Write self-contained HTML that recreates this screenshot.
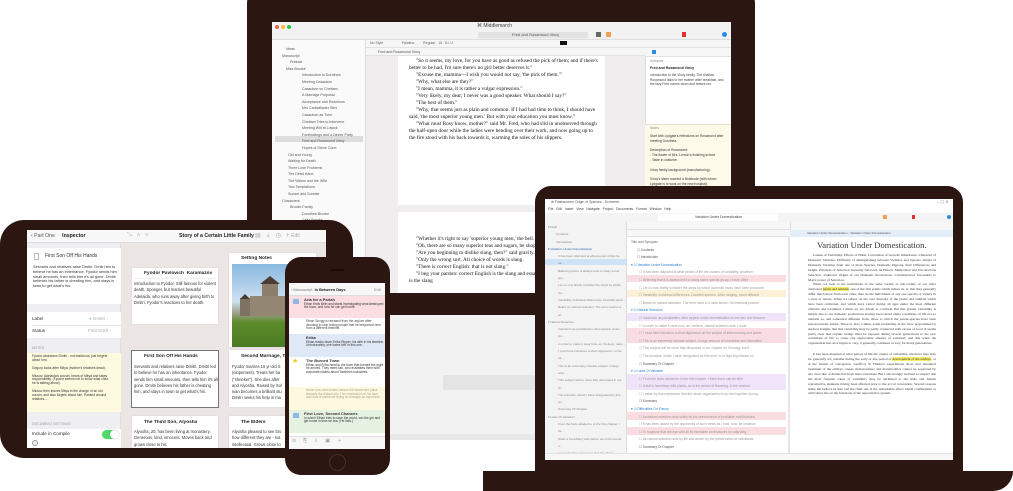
<!DOCTYPE html>
<html><head><meta charset="utf-8">
<style>
*{box-sizing:border-box;margin:0;padding:0}
html,body{width:1013px;height:491px;overflow:hidden}
body{background:#fff;font-family:"Liberation Sans",sans-serif;position:relative}
.a{position:absolute}
.frame{background:#2b1611}
.serif{font-family:"Liberation Serif",serif}
.t{position:absolute;white-space:nowrap;overflow:hidden}
</style></head><body>
<div class="a" style="left:0;top:0;width:1013px;height:491px;overflow:hidden">

<!-- iMac stand -->
<div class="a" style="left:383px;top:300px;width:155px;height:140px;background:#f2f2f2"></div>
<div class="a" style="left:443px;top:375px;width:95px;height:15px;background:#e4e4e4"></div>
<div class="a" style="left:383px;top:434px;width:155px;height:6px;background:#e8e8e8"></div>

<!-- iMac -->
<div class="a frame" style="left:247px;top:-20px;width:508px;height:335px;border-radius:24px"></div>
<div class="a" style="left:272px;top:22px;width:459px;height:271px;background:#fff;overflow:hidden">
  <div class="a" style="left:0;top:0;width:459px;height:18px;background:#f3f2f2;border-bottom:1px solid #ddd"></div>
  <div class="a" style="left:3px;top:3px;width:4px;height:4px;border-radius:50%;background:#f25f57"></div>
  <div class="a" style="left:9px;top:3px;width:4px;height:4px;border-radius:50%;background:#f8bd2e"></div>
  <div class="a" style="left:15px;top:3px;width:4px;height:4px;border-radius:50%;background:#29c840"></div>
  <div class="t" style="left:205px;top:1px;font-size:5px;color:#444">⌘ Middlemarch</div>
  <div class="a" style="left:206px;top:10px;width:110px;height:6px;background:#e3e2e2;border-radius:1px"></div>
  <div class="t" style="left:240px;top:10px;font-size:4px;color:#555">Fred and Rosamond Vincy</div>
  <div class="a" style="left:324px;top:10px;width:5px;height:5px;background:#666"></div>
  <div class="a" style="left:334px;top:10px;width:5px;height:5px;background:#f0a050"></div>
  <div class="a" style="left:410px;top:10px;width:4px;height:5px;background:#d33"></div>
  <div class="a" style="left:450px;top:10px;width:5px;height:5px;border-radius:50%;background:#2a8be6"></div>
  <div class="a" style="left:0;top:18px;width:94px;height:253px;background:#fafafa;border-right:1px solid #ddd"></div>
  <div class="a" style="left:3px;top:114px;width:88px;height:6px;background:#ddd"></div>
  <div class="a" style="left:0;top:24px;font-size:3.6px;color:#555;line-height:6.6px">
   <div style="padding-left:14px">Ideas</div><div style="padding-left:10px">Manuscript</div><div style="padding-left:18px">Prelude</div><div style="padding-left:14px">Miss Brooke</div>
   <div style="padding-left:30px">Introduction to Dorothea</div><div style="padding-left:30px">Meeting Casaubon</div><div style="padding-left:30px">Casaubon vs Chettam</div><div style="padding-left:30px">A Marriage Proposal</div><div style="padding-left:30px">Acceptance and Reactions</div><div style="padding-left:30px">Mrs Cadwallader Stirs</div><div style="padding-left:30px">Casaubon as Tutor</div><div style="padding-left:30px">Chettam Tries to Intervene</div><div style="padding-left:30px">Meeting Will at Lowick</div><div style="padding-left:30px">Forebodings and a Dinner Party</div><div style="padding-left:30px">Fred and Rosamond Vincy</div><div style="padding-left:30px">Hopes of Stone Court</div>
   <div style="padding-left:16px">Old and Young</div><div style="padding-left:16px">Waiting for Death</div><div style="padding-left:16px">Three Love Problems</div><div style="padding-left:16px">The Dead Hand</div><div style="padding-left:16px">The Widow and the Wife</div><div style="padding-left:16px">Two Temptations</div><div style="padding-left:16px">Sunset and Sunrise</div><div style="padding-left:10px">Characters</div><div style="padding-left:18px">Brooke Family</div><div style="padding-left:30px">Dorothea Brooke</div><div style="padding-left:30px">Celia Brooke</div>
  </div>
  <div class="a" style="left:94px;top:18px;width:280px;height:253px;background:#efeded"></div>
  <div class="a" style="left:94px;top:18px;width:365px;height:8px;background:#f7f6f6;border-bottom:1px solid #e2e2e2"></div>
  <div class="t" style="left:98px;top:19px;font-size:3.5px;color:#666">No Style &nbsp; &nbsp; &nbsp; &nbsp; &nbsp; &nbsp; &nbsp; &nbsp; &nbsp; Palatino &nbsp; &nbsp; &nbsp; &nbsp; Regular &nbsp; 16 &nbsp; B I U</div>
  <div class="a" style="left:288px;top:19px;width:7px;height:4px;background:#111"></div>
  <div class="a" style="left:94px;top:26px;width:280px;height:8px;background:#f7f6f6;border-bottom:1px solid #e2e2e2"></div>
  <div class="t" style="left:106px;top:28px;font-size:3.6px;color:#555">Fred and Rosamond Vincy</div>
  <div class="a" style="left:126px;top:34px;width:207px;height:149px;background:#fff"></div>
  <div class="a serif" style="left:137px;top:36px;width:190px;font-size:5.3px;line-height:7px;color:#111">
   <div style="text-indent:7px">"So it seems, my love, for you have as good as refused the pick of them; and if there's better to be had, I'm sure there's no girl better deserves it."</div>
   <div style="text-indent:7px">"Excuse me, mamma—I wish you would not say, 'the pick of them.'"</div>
   <div style="text-indent:7px">"Why, what else are they?"</div>
   <div style="text-indent:7px">"I mean, mamma, it is rather a vulgar expression."</div>
   <div style="text-indent:7px">"Very likely, my dear; I never was a good speaker. What should I say?"</div>
   <div style="text-indent:7px">"The best of them."</div>
   <div style="text-indent:7px">"Why, that seems just as plain and common. If I had had time to think, I should have said, 'the most superior young men.' But with your education you must know."</div>
   <div style="text-indent:7px">"What must Rosy know, mother?" said Mr. Fred, who had slid in unobserved through the half-open door while the ladies were bending over their work, and now going up to the fire stood with his back towards it, warming the soles of his slippers.</div>
  </div>
  <div class="a" style="left:126px;top:190px;width:207px;height:81px;background:#fff"></div>
  <div class="a serif" style="left:137px;top:214px;width:200px;font-size:5.3px;line-height:7px;color:#111">
   <div style="text-indent:7px">"Whether it's right to say 'superior young men,' the bell.</div>
   <div style="text-indent:7px">"Oh, there are so many superior teas and sugars, be shopkeepers' slang."</div>
   <div style="text-indent:7px">"Are you beginning to dislike slang, then?" said gravity.</div>
   <div style="text-indent:7px">"Only the wrong sort. All choice of words is slang.</div>
   <div style="text-indent:7px">"There is correct English: that is not slang."</div>
   <div style="text-indent:7px">"I beg your pardon: correct English is the slang and essays. And the strongest slang of all is the slang</div>
  </div>
  <div class="a" style="left:373px;top:26px;width:86px;height:245px;background:#fff;border-left:1px solid #ddd"></div>
  <div class="a" style="left:373px;top:26px;width:86px;height:9px;background:#f7f6f6;border-bottom:1px solid #e2e2e2"></div>
  <div class="a" style="left:380px;top:28px;width:4px;height:4px;background:#2a8be6"></div>
  <div class="t" style="left:378px;top:37px;font-size:3.3px;color:#888">Synopsis</div>
  <div class="t" style="left:378px;top:44px;font-size:3.5px;color:#222;font-weight:bold">Fred and Rosamond Vincy</div>
  <div class="a" style="left:378px;top:51px;width:78px;font-size:3.3px;line-height:4.6px;color:#444">Introduction to the Vincy family. The shallow Rosamond talks to her mother after breakfast, and the lazy Fred comes down and teases her.</div>
  <div class="a" style="left:373px;top:102px;width:86px;height:169px;background:#fdfae9;border-top:1px solid #e5e0cc"></div>
  <div class="t" style="left:378px;top:104px;font-size:3.3px;color:#888">Notes</div>
  <div class="a" style="left:378px;top:112px;width:78px;font-size:3.3px;line-height:4.8px;color:#333">Start with Lydgate's reflections on Rosamond after meeting Dorothea.<br><br>Description of Rosamond:<br>- The flower of Mrs. Lemon's finishing school.<br>- Taste in costume.<br><br>Vincy family background (manufacturing).<br><br>Vincy's sister married a Bulstrode (with whom Lydgate is to work on the new hospital).</div>
</div>

<!-- Laptop -->
<div class="a frame" style="left:483px;top:471px;width:530px;height:20px;border-radius:0 0 20px 0"></div>
<div class="a frame" style="left:535px;top:186px;width:428px;height:290px;border-radius:16px 16px 0 0"></div>
<div class="a" style="left:545px;top:199px;width:408px;height:261px;background:#fff;overflow:hidden">
  <div class="t" style="left:6px;top:1px;font-size:3.5px;color:#555">⊕ Flashscreen Origin of Species - Scrivener</div>
  <div class="t" style="left:392px;top:0px;font-size:4px;color:#777">–  ▢  ✕</div>
  <div class="t" style="left:3px;top:8px;font-size:3.4px;color:#444">File &nbsp; Edit &nbsp; Insert &nbsp; View &nbsp; Navigate &nbsp; Project &nbsp; Documents &nbsp; Format &nbsp; Window &nbsp; Help</div>
  <div class="a" style="left:0;top:14px;width:408px;height:9px;background:#f4f4f4"></div>
  <div class="a" style="left:113px;top:15px;width:120px;height:7px;background:#fff"></div>
  <div class="t" style="left:150px;top:16px;font-size:3.5px;color:#444">Variation Under Domestication</div>
  <div class="a" style="left:338px;top:16px;width:4px;height:4px;background:#f0a050"></div>
  <div class="a" style="left:367px;top:16px;width:3px;height:4px;background:#d33"></div>
  <div class="a" style="left:402px;top:16px;width:4px;height:4px;border-radius:50%;background:#2a8be6"></div>
  <div class="a" style="left:0;top:23px;width:82px;height:238px;background:#f3f3f3;border-right:1px solid #ddd"></div>
  <div class="a" style="left:0;top:60px;width:82px;height:6px;background:#cfe2f6"></div>
  <div class="a" style="left:3px;top:25px;width:78px;font-size:3.1px;line-height:7.3px;color:#888">
   <div>▾ Draft</div><div style="padding-left:8px">Contents</div><div style="padding-left:8px">Introduction</div><div style="color:#2666b0">▾ Variation Under Domestication</div>
   <div style="padding-left:10px">It has been disputed at what period of life the ca...</div><div style="padding-left:10px">Believing that it is always best to study some gro...</div><div style="padding-left:10px">Let us now briefly consider the steps by which do...</div><div style="padding-left:10px">Variability. Individual differences. Doubtful speci...</div><div style="padding-left:10px">Bears on natural selection. The term used in a wi...</div>
   <div>▾ Natural Selection</div><div style="padding-left:10px">Inasmuch as peculiarities often appear under do...</div><div style="padding-left:10px">In order to make it clear how, as I believe, natur...</div><div style="padding-left:10px">I must here introduce a short digression, in the ca...</div><div style="padding-left:10px">This is an extremely intricate subject. A large amo...</div><div style="padding-left:10px">This subject will be more fully discussed in our ch...</div><div style="padding-left:10px">The principle, which I have designated by this ter...</div><div style="padding-left:10px">Summary Of Chapter</div>
   <div>▾ Laws Of Variation</div><div style="padding-left:10px">From the facts alluded to in the first chapter, I thi...</div><div style="padding-left:10px">Habit is hereditary with plants, as in the period o...</div><div style="padding-left:10px">I mean by this expression that the whole organis...</div><div style="padding-left:10px">Summary</div>
   <div>▾ Difficulties On Theory</div><div style="padding-left:10px">As natural selection acts solely by the preservatio...</div><div style="padding-left:10px">It has been asked by the opponents of such views...</div><div style="padding-left:10px">To suppose that the eye, with all its inimitable co...</div><div style="padding-left:10px">As natural selection acts by life and death, by th...</div><div style="padding-left:10px">Summary Of Chapter</div>
   <div>▾ Instinct</div><div style="padding-left:10px">The remarkable instinct was first discovered in t...</div><div style="padding-left:10px">I will not here enter on these several details in t...</div><div style="padding-left:10px">Summary</div><div>▾ Hybridism</div><div style="padding-left:10px">We will now consider a little more in detail the ci...</div><div style="padding-left:10px">We may now look a little at the plants...</div>
  </div>
  <div class="a" style="left:82px;top:23px;width:163px;height:8px;background:#f7f7f7;border-bottom:1px solid #e2e2e2"></div>
  <div class="a" style="left:82px;top:31px;width:163px;height:7px;background:#f7f7f7;border-bottom:1px solid #e2e2e2"></div>
  <div class="a" style="left:82px;top:76px;width:159px;height:7px;background:#f9dde3"></div>
  <div class="a" style="left:82px;top:91px;width:159px;height:7px;background:#fcf1d6"></div>
  <div class="a" style="left:82px;top:114px;width:159px;height:8px;background:#efe4fa"></div>
  <div class="a" style="left:82px;top:129px;width:159px;height:15px;background:#f9dde3"></div>
  <div class="a" style="left:82px;top:175px;width:159px;height:16px;background:#efe4fa"></div>
  <div class="a" style="left:82px;top:213px;width:159px;height:8px;background:#f9dde3"></div>
  <div class="a" style="left:82px;top:228px;width:159px;height:8px;background:#f9dde3"></div>
  <div class="a" style="left:86px;top:40px;width:155px;font-size:3.3px;line-height:7.6px;color:#999">
   <div style="color:#666">Title and Synopsis</div><div style="padding-left:6px;color:#555">☐ Contents</div><div style="padding-left:6px;color:#555">☐ Introduction</div><div style="color:#2a7fd4">▾ ☑ Variation Under Domestication</div>
   <div style="padding-left:8px">☐ It has been disputed at what period of life the causes of variability, whatever</div><div style="padding-left:8px">☐ Believing that it is always best to study some special group, I have, after</div><div style="padding-left:8px">☐ Let us now briefly consider the steps by which domestic races have been produced</div><div style="padding-left:8px">☐ Variability. Individual differences. Doubtful species. Wide ranging, much diffused</div><div style="padding-left:8px">☐ Bears on natural selection. The term used in a wide sense. Geometrical powers</div>
   <div style="color:#2a7fd4">▾ ☑ Natural Selection</div><div style="padding-left:8px">☐ Inasmuch as peculiarities often appear under domestication in one sex and become</div><div style="padding-left:8px">☐ In order to make it clear how, as I believe, natural selection acts, I must</div><div style="padding-left:8px">☐ I must here introduce a short digression on the subject of intercrossing and plants</div><div style="padding-left:8px">☐ This is an extremely intricate subject. A large amount of inheritable and diversified</div><div style="padding-left:8px">☐ This subject will be more fully discussed in our chapter on Geology; but it</div><div style="padding-left:8px">☐ The principle, which I have designated by this term, is of high importance on</div><div style="padding-left:8px;color:#555">☐ Summary Of Chapter</div>
   <div style="color:#2a7fd4">▾ ☑ Laws Of Variation</div><div style="padding-left:8px">☐ From the facts alluded to in the first chapter, I think there can be little</div><div style="padding-left:8px">☐ Habit is hereditary with plants, as in the period of flowering, in the amount</div><div style="padding-left:8px">☐ I mean by this expression that the whole organisation is so tied together during</div><div style="padding-left:8px;color:#555">☐ Summary</div>
   <div style="color:#2a7fd4">▾ ☑ Difficulties On Theory</div><div style="padding-left:8px">☐ As natural selection acts solely by the preservation of profitable modifications</div><div style="padding-left:8px">☐ It has been asked by the opponents of such views as I hold, how, for instance</div><div style="padding-left:8px">☐ To suppose that the eye with all its inimitable contrivances for adjusting</div><div style="padding-left:8px">☐ As natural selection acts by life and death, by the preservation of individuals</div><div style="padding-left:8px;color:#555">☐ Summary Of Chapter</div>
  </div>
  <div class="a" style="left:243px;top:38px;width:2px;height:216px;background:#e6e6e6"></div>
  <div class="a" style="left:245px;top:23px;width:163px;height:15px;background:#f7f7f7;border-left:1px solid #ddd"></div>
  <div class="a" style="left:245px;top:31px;width:163px;height:7px;background:#e3eefa"></div>
  <div class="t" style="left:262px;top:32px;font-size:3px;color:#555">Variation Under Domestication - Variation Under Domestication</div>
  <div class="t serif" style="left:272px;top:41px;font-size:8.6px;color:#333">Variation Under Domestication.</div>
  <div class="a serif" style="left:263px;top:54px;width:128px;font-size:3.5px;line-height:4.9px;color:#333;text-align:justify">
   <div style="text-indent:5px">Causes of Variability. Effects of Habit. Correlation of Growth. Inheritance. Character of Domestic Varieties. Difficulty of distinguishing between Varieties and Species. Origin of Domestic Varieties from one or more Species. Domestic Pigeons, their Differences and Origin. Principle of Selection anciently followed, its Effects. Methodical and Unconscious Selection. Unknown Origin of our Domestic Productions. Circumstances favourable to Man's power of Selection.</div>
   <div style="text-indent:5px">When we look to the individuals of the same variety or sub-variety of our older cultivated <span style="background:#f7ee6a">plants and animals</span>, one of the first points which strikes us, is, that they generally differ much more from each other, than do the individuals of any one species or variety in a state of nature. When we reflect on the vast diversity of the plants and animals which have been cultivated, and which have varied during all ages under the most different climates and treatment, I think we are driven to conclude that this greater variability is simply due to our domestic productions having been raised under conditions of life not so uniform as, and somewhat different from, those to which the parent-species have been exposed under nature. There is, also, I think, some probability in the view propounded by Andrew Knight, that this variability may be partly connected with excess of food. It seems pretty clear that organic beings must be exposed during several generations to the new conditions of life to cause any appreciable amount of variation; and that when the organisation has once begun to vary, it generally continues to vary for many generations.</div>
   <div style="height:6px"></div>
   <div style="text-indent:5px">It has been disputed at what period of life the causes of variability, whatever they may be, generally act; whether during the early or late period of <span style="background:#f7ee6a">development of the embryo</span>, or at the instant of conception. Geoffroy St Hilaire's experiments show that unnatural treatment of the embryo causes monstrosities; and monstrosities cannot be separated by any clear line of distinction from mere variations. But I am strongly inclined to suspect that the most frequent cause of variability may be attributed to the male and female reproductive elements having been affected prior to the act of conception. Several reasons make me believe in this; but the chief one is the remarkable effect which confinement or cultivation has on the functions of the reproductive system.</div>
  </div>
  <div class="a" style="left:245px;top:254px;width:163px;height:7px;background:#f7f7f7;border-top:1px solid #e2e2e2"></div>
  <div class="a" style="left:0;top:254px;width:245px;height:7px;background:#f7f7f7;border-top:1px solid #e2e2e2"></div>
</div>

<!-- iPad -->
<div class="a frame" style="left:0;top:220px;width:353px;height:238px;border-radius:24px"></div>
<div class="a" style="left:27px;top:230px;width:299px;height:218px;background:#ebe5e3;overflow:hidden">
  <div class="a" style="left:0;top:0;width:299px;height:13px;background:#f7f7f7;border-bottom:1px solid #ddd"></div>
  <div class="t" style="left:4px;top:3px;font-size:5.2px;color:#555">‹ Part One &nbsp; &nbsp; <b style="color:#222">Inspector</b></div>
  <div class="t" style="left:100px;top:2px;font-size:6px;color:#aaa">⤡ &nbsp; ∧ &nbsp; ∨</div>
  <div class="t" style="left:152px;top:3px;font-size:5.2px;color:#222;font-weight:bold">Story of a Certain Little Family</div>
  <div class="t" style="left:228px;top:2px;font-size:6px;color:#aaa">▤ &nbsp; ⇣ &nbsp; ◷ &nbsp; + <span style="font-size:5px">Edit</span></div>
  <div class="a" style="left:0;top:13px;width:94px;height:205px;background:#efeff2;border-right:1px solid #ddd"></div>
  <div class="a" style="left:0;top:18px;width:94px;height:56px;background:#fff"></div>
  <div class="a" style="left:7px;top:23px;width:5px;height:7px;border:1px solid #bbb"></div>
  <div class="t" style="left:18px;top:23px;font-size:5px;color:#333">First Son Off His Hands</div>
  <div class="a" style="left:6px;top:35px;width:86px;font-size:3.9px;line-height:4.8px;color:#333">Servants and relatives raise Dmitri. Dmitri led to believe he has an inheritance. Fyodor sends him small amounts, then tells him it's all gone. Dmitri believes his father is cheating him, and stays in town to get what's his.</div>
  <div class="a" style="left:0;top:82px;width:94px;height:26px;background:#fff"></div>
  <div class="a" style="left:6px;top:95px;width:88px;height:1px;background:#e3e3e3"></div>
  <div class="t" style="left:5px;top:86px;font-size:4.6px;color:#333">Label</div>
  <div class="t" style="left:62px;top:86px;font-size:4.6px;color:#aaa"><span style="color:#8fc5ea">●</span> Dmitri ›</div>
  <div class="t" style="left:5px;top:98px;font-size:4.6px;color:#333">Status</div>
  <div class="t" style="left:61px;top:98px;font-size:4.6px;color:#aaa">First Draft ›</div>
  <div class="t" style="left:5px;top:116px;font-size:3.5px;color:#999">NOTES</div>
  <div class="a" style="left:0;top:123px;width:94px;height:59px;background:#fdfadf"></div>
  <div class="a" style="left:5px;top:125px;width:80px;font-size:3.3px;line-height:3.9px;color:#333">Fyodor abandons Dmitri - not malicious, just forgets about him.<br><br>Grigory looks after Mitya (mother's relatives dead).<br><br>Miusov, Adelaida's cousin, hears of Mitya and takes responsibility. (Fyodor seems not to know what child he is talking about)<br><br>Miusov then leaves Mitya in the charge of an old cousin, and also forgets about him. Passed around relatives....</div>
  <div class="t" style="left:5px;top:192px;font-size:3.5px;color:#999">DOCUMENT SETTINGS</div>
  <div class="a" style="left:0;top:199px;width:94px;height:19px;background:#fff"></div>
  <div class="t" style="left:5px;top:201px;font-size:4.6px;color:#333">Include in Compile</div>
  <div class="a" style="left:75px;top:200px;width:16px;height:9px;border-radius:5px;background:#4cd964"></div>
  <div class="a" style="left:83px;top:200px;width:9px;height:9px;border-radius:50%;background:#fff;box-shadow:0 0 1px #888"></div>
  <div class="a" style="left:5px;top:210px;width:6px;height:6px;border-radius:50%;border:1px solid #999;background:#efeff2"></div>
  <div class="a" style="left:105px;top:38px;width:86px;height:56px;background:#fff;box-shadow:0 0 1px #ccc"></div>
  <div class="t" style="left:117px;top:41px;font-size:4.8px;color:#222;font-weight:bold">Fyodor Pavlovich &nbsp;Karamazov</div>
  <div class="a" style="left:107px;top:48px;width:82px;height:1px;background:#eee"></div>
  <div class="a" style="left:107px;top:51px;width:82px;font-size:4.1px;line-height:6.3px;color:#333">Introduction to Fyodor. Still famous for violent death. Sponger, but marries beautiful Adelaida, who runs away after giving birth to Dmitri. Fyodor's reactions to her death.</div>
  <div class="a" style="left:202px;top:23px;width:87px;height:94px;background:#fff;box-shadow:0 0 1px #ccc"></div>
  <div class="t" style="left:214px;top:26px;font-size:4.8px;color:#222;font-weight:bold">Setting Notes</div>
  <div class="a" style="left:205px;top:34px;width:82px;height:83px;overflow:hidden;background:linear-gradient(#8ab8e0 0%,#cde0ef 45%,#9a9d84 60%,#5d8c2c 70%,#4a7a22 100%)">
    <div class="a" style="left:28px;top:12px;width:20px;height:8px;background:#4c3c33;clip-path:polygon(50% 0,100% 100%,0 100%)"></div>
    <div class="a" style="left:30px;top:20px;width:16px;height:30px;background:#8d7d6a"></div>
    <div class="a" style="left:18px;top:32px;width:40px;height:20px;background:#938673"></div>
    <div class="a" style="left:8px;top:34px;width:10px;height:18px;background:#7e7264"></div>
    <div class="a" style="left:8px;top:30px;width:10px;height:5px;background:#4c3c33;clip-path:polygon(50% 0,100% 100%,0 100%)"></div>
  </div>
  <div class="a" style="left:104px;top:120px;width:88px;height:58px;background:#fff;border:1px solid #777"></div>
  <div class="t" style="left:117px;top:124px;font-size:4.8px;color:#222;font-weight:bold">First Son Off His Hands</div>
  <div class="a" style="left:107px;top:134px;width:84px;font-size:4.1px;line-height:6.3px;color:#333">Servants and relatives raise Dmitri. Dmitri led to believe he has an inheritance. Fyodor sends him small amounts, then tells him it's all gone. Dmitri believes his father is cheating him, and stays in town to get what's his.</div>
  <div class="a" style="left:202px;top:120px;width:97px;height:57px;background:#fff;box-shadow:0 0 1px #ccc"></div>
  <div class="t" style="left:214px;top:124px;font-size:4.8px;color:#222;font-weight:bold">Second Marriage, T</div>
  <div class="a" style="left:205px;top:134px;width:94px;font-size:4.1px;line-height:6.3px;color:#333;white-space:nowrap;overflow:hidden">Fyodor marries 16 yr-old S<br>(elopement). Treats her ba<br>("shrieker"). She dies after<br>and Alyosha. Raised by Sol<br>Ivan becomes a brilliant stu<br>Dmitri seeks his help in ma</div>
  <div class="a" style="left:105px;top:186px;width:86px;height:40px;background:#fff;box-shadow:0 0 1px #ccc"></div>
  <div class="t" style="left:117px;top:190px;font-size:4.8px;color:#222;font-weight:bold">The Third Son, Alyosha</div>
  <div class="a" style="left:107px;top:199px;width:84px;font-size:4.1px;line-height:6.3px;color:#333">Alyosha, 20, has been living at monastery. Generous, kind, innocent. Moves back and grows close to his</div>
  <div class="a" style="left:202px;top:186px;width:97px;height:40px;background:#fff;box-shadow:0 0 1px #ccc"></div>
  <div class="t" style="left:214px;top:190px;font-size:4.8px;color:#222;font-weight:bold">The Elders</div>
  <div class="a" style="left:205px;top:199px;width:94px;font-size:4.1px;line-height:6.3px;color:#333;white-space:nowrap;overflow:hidden">Alyosha pleased to see bro<br>how different they are - Iva<br>intellectual. Grows close to</div>
</div>

<!-- iPhone -->
<div class="a frame" style="left:285px;top:257px;width:105px;height:218px;border-radius:16px"></div>
<div class="a" style="left:330px;top:269px;width:14px;height:2px;border-radius:1px;background:#1a0c08"></div>
<div class="a" style="left:329px;top:454px;width:17px;height:17px;border-radius:50%;border:1px solid #4a3028"></div>
<div class="a" style="left:289px;top:283px;width:96px;height:166px;background:#fff;overflow:hidden">
  <div class="a" style="left:0;top:0;width:96px;height:13px;background:#f7f7f7;border-bottom:1px solid #ddd"></div>
  <div class="t" style="left:2px;top:4px;font-size:3.9px;color:#777">‹ Manuscript &nbsp;<b style="color:#222">In Between Days</b></div>
  <div class="t" style="left:85px;top:4px;font-size:3.9px;color:#888">Edit</div>
  <div class="a" style="left:0;top:13px;width:96px;height:22px;background:#fbdde2"></div>
  <div class="a" style="left:0;top:51px;width:96px;height:23px;background:#dfe8f7"></div>
  <div class="a" style="left:0;top:104px;width:96px;height:23px;background:#fdf9df"></div>
  <div class="a" style="left:0;top:127px;width:96px;height:23px;background:#e5f1e1"></div>
  <div class="a" style="left:4px;top:16px;width:6px;height:5px;background:#8fb8e0"></div>
  <div class="a" style="left:4px;top:130px;width:6px;height:5px;background:#8fb8e0"></div>
  <div class="t" style="left:3px;top:74px;font-size:7px;color:#f2c81b">★</div>
  <div class="a" style="left:15px;top:15px;width:80px;font-size:3.2px;line-height:3.7px;color:#333"><b style="font-size:4px">Aria for a Pariah</b><br>Ethan finds Beth and starts investigating what destroyed the town, and how he can get home.</div>
  <div class="a" style="left:17px;top:37px;width:78px;font-size:3.2px;line-height:3.7px;color:#444">Ethan Snogg is released from the asylum after deciding to stop telling people that he teleported here from a different timeline.</div>
  <div class="a" style="left:17px;top:53px;width:78px;font-size:3.2px;line-height:3.7px;color:#333"><b style="font-size:4px">Erika</b><br>Ethan tracks down Erika Ripper, his wife in his timeline. Unfortunately, she hates him in this one.</div>
  <div class="a" style="left:17px;top:76px;width:78px;font-size:3.2px;line-height:3.7px;color:#333"><b style="font-size:4px">The Burned Town</b><br>Ethan and Erika head to the town that burned the night he arrived. They meet Ash, who frustrates them with corporate riddles about Tamhelm Industries.</div>
  <div class="a" style="left:17px;top:106px;width:78px;font-size:3.2px;line-height:3.7px;color:#a9a58a">Alone now, Ash looked across the blackened place towards the distant city. The expression on his face was that of someone trying to untangle an important...</div>
  <div class="a" style="left:15px;top:129px;width:80px;font-size:3.2px;line-height:3.7px;color:#333"><b style="font-size:4px">First Love, Second Chances</b><br>In which Ethan tries to save the world, win the girl and get home in time for tea. (He fails.)</div>
  <div class="a" style="left:0;top:153px;width:96px;height:13px;background:#f7f7f7;border-top:1px solid #ddd"></div>
  <div class="t" style="left:3px;top:155px;font-size:5px;color:#999">⊙ &nbsp; &nbsp; ⎘ &nbsp; &nbsp; ⇩ &nbsp; &nbsp; ▣ &nbsp; &nbsp; &nbsp;+</div>
</div>

</div>
</body></html>
